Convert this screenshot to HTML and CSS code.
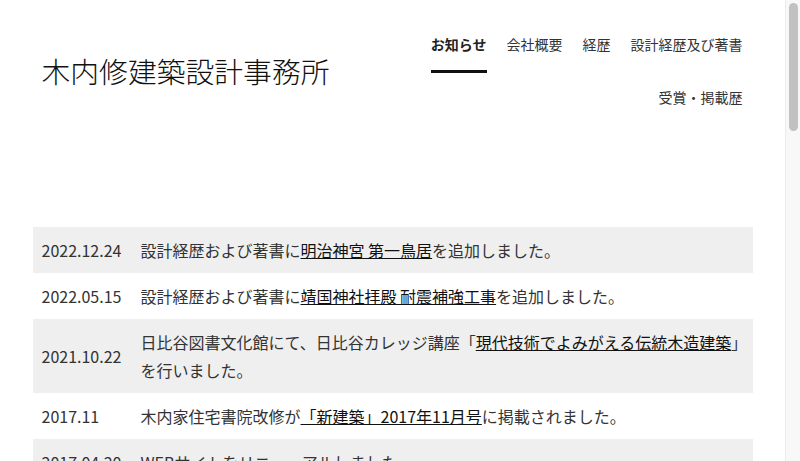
FILE: index.html
```html
<!DOCTYPE html>
<html lang="ja">
<head>
<meta charset="utf-8">
<title>木内修建築設計事務所</title>
<link rel="stylesheet" href="styles.css">
</head>
<body>
<div class="page">
<header class="header">
  <h1 class="site-title">木内修建築設計事務所</h1>
  <nav class="nav">
    <a class="nav-item is-active" href="#">お知らせ</a>
    <a class="nav-item" href="#">会社概要</a>
    <a class="nav-item" href="#">経歴</a>
    <a class="nav-item" href="#">設計経歴及び著書</a>
    <a class="nav-item" href="#">受賞・掲載歴</a>
  </nav>
</header>
<main class="main">
  <ul class="news">
    <li class="news-row"><span class="news-date">2022.12.24</span><span class="news-text">設計経歴および著書に<a href="#">明治神宮 第一鳥居</a>を追加しました。</span></li>
    <li class="news-row"><span class="news-date">2022.05.15</span><span class="news-text">設計経歴および著書に<a href="#">靖国神社拝殿 耐震補強工事</a>を追加しました。</span></li>
    <li class="news-row"><span class="news-date">2021.10.22</span><span class="news-text">日比谷図書文化館にて、日比谷カレッジ講座「<a href="#">現代技術でよみがえる伝統木造建築</a>」を行いました。</span></li>
    <li class="news-row"><span class="news-date">2017.11</span><span class="news-text">木内家住宅書院改修が<a href="#">「新建築」2017年11月号</a>に掲載されました。</span></li>
    <li class="news-row"><span class="news-date">2017.04.20</span><span class="news-text">WEBサイトをリニューアルしました。</span></li>
    <li class="news-row"><span class="news-date">2016.10.01</span><span class="news-text">事務所を移転しました。</span></li>
    <li class="news-row"><span class="news-date">2015.06.01</span><span class="news-text">お知らせ</span></li>
    <li class="news-row"><span class="news-date">2014.04.01</span><span class="news-text">お知らせ</span></li>
  </ul>
</main>
<footer class="footer">
  <p class="copy">© 木内修建築設計事務所</p>
</footer>
</div>
<div class="scrollbar" aria-hidden="true"><div class="scrollbar-thumb"></div></div>
</body>
</html>
```

FILE: styles.css
```css
body {
  margin: 0;
  font-family: "Noto Sans CJK JP", "Noto Sans", sans-serif;
  color: #333;
  background: #fff;
}
a {
  color: #111;
}
.page {
  width: 785px;
}
.scrollbar {
  position: fixed;
  top: 0;
  right: 0;
  width: 14px;
  height: 100%;
  background: #f8f8f8;
  border-left: 1px solid #ebebeb;
}
.scrollbar-thumb {
  position: absolute;
  top: 3px;
  left: 3px;
  width: 9px;
  height: 128px;
  border-radius: 5px;
  background: #c1c1c1;
}
.header {
  max-width: 720px;
  margin: 0 auto;
  padding: 20px 0 0;
  display: flex;
  align-items: center;
  justify-content: space-between;
}
.site-title {
  margin: 0 0 4px 9px;
  font-size: 28.8px;
  font-weight: 300;
  color: #111;
  line-height: 1.4;
  white-space: nowrap;
}
.nav {
  display: flex;
  flex-wrap: wrap;
  justify-content: flex-end;
  width: 340px;
}
.nav-item {
  margin: 0 10px;
  padding: 14px 0 16px;
  line-height: 20px;
  font-size: 14px;
  color: #333;
  text-decoration: none;
  border-bottom: 3px solid transparent;
}
.nav-item.is-active {
  font-weight: 700;
  color: #222;
  border-bottom-color: #111;
}
.main {
  max-width: 720px;
  margin: 0 auto;
  padding-top: 101px;
}
.news {
  list-style: none;
  margin: 0;
  padding: 0;
}
.news-row {
  display: flex;
  align-items: center;
  padding: 9px 9px;
  font-size: 16px;
  line-height: 28px;
}
.news-row:nth-child(odd) {
  background: #efefef;
}
.news-date {
  flex: 0 0 99px;
}
.news-text {
  flex: 1;
}
.footer {
  max-width: 720px;
  margin: 0 auto;
  padding: 600px 0 60px;
}
.copy {
  margin: 0;
  font-size: 12px;
}
```
